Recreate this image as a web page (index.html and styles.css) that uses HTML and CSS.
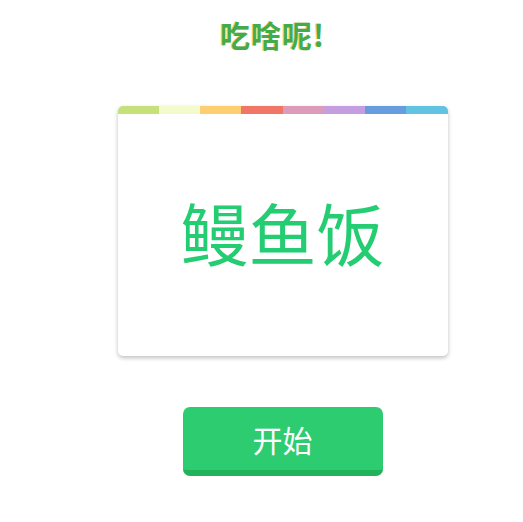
FILE: index.html
```html
<!DOCTYPE html>
<html lang="zh">
<head>
<meta charset="utf-8">
<title>吃啥呢!</title>
<link rel="stylesheet" href="styles.css">
</head>
<body>
<div class="page">
  <h1 class="title">吃啥呢!</h1>
  <div class="card">
    <div class="stripe">
      <span class="s1"></span><span class="s2"></span><span class="s3"></span><span class="s4"></span>
      <span class="s5"></span><span class="s6"></span><span class="s7"></span><span class="s8"></span>
    </div>
    <div class="card-body">
      <div class="food">鳗鱼饭</div>
    </div>
  </div>
  <button class="start">开始</button>
</div>
</body>
</html>
```

FILE: styles.css
```css
html, body {
  margin: 0;
  padding: 0;
  background: #fff;
}
body {
  font-family: "Noto Sans CJK SC", "Noto Sans", sans-serif;
}
.page {
  display: flex;
  flex-direction: column;
  align-items: center;
  padding-top: 14px;
  padding-left: 42px;
}
.title {
  margin: 0 20px 0 0;
  font-size: 30px;
  line-height: 41px;
  font-weight: 700;
  color: #43ab4a;
  text-shadow: -1px 0 0 rgba(240, 190, 40, 0.7);
  letter-spacing: 1px;
}
.card {
  margin-top: 51px;
  width: 330px;
  height: 250px;
  border-radius: 5px;
  overflow: hidden;
  background: #fff;
  box-shadow: 0 2px 4px rgba(0, 0, 0, 0.25);
  display: flex;
  flex-direction: column;
}
.stripe {
  display: flex;
  height: 8px;
  flex: none;
}
.stripe span { flex: 1; }
.s1 { background: #c6e17c; }
.s2 { background: #f3facb; }
.s3 { background: #fdcf71; }
.s4 { background: #f07668; }
.s5 { background: #dc9cb9; }
.s6 { background: #c59ee0; }
.s7 { background: #669ddf; }
.s8 { background: #62c2e2; }
.card-body {
  flex: 1;
  display: flex;
  align-items: center;
  justify-content: center;
}
.food {
  font-size: 68px;
  line-height: 1;
  color: #24cc72;
  margin-top: -6px;
}
.start {
  margin-top: 51px;
  width: 200px;
  height: 69px;
  border: none;
  border-bottom: 6px solid #21b359;
  border-radius: 7px;
  background: #2ecc71;
  color: #fff;
  font-family: "Noto Sans CJK SC", "Noto Sans", sans-serif;
  font-size: 30px;
  padding: 0;
  cursor: pointer;
}
```
